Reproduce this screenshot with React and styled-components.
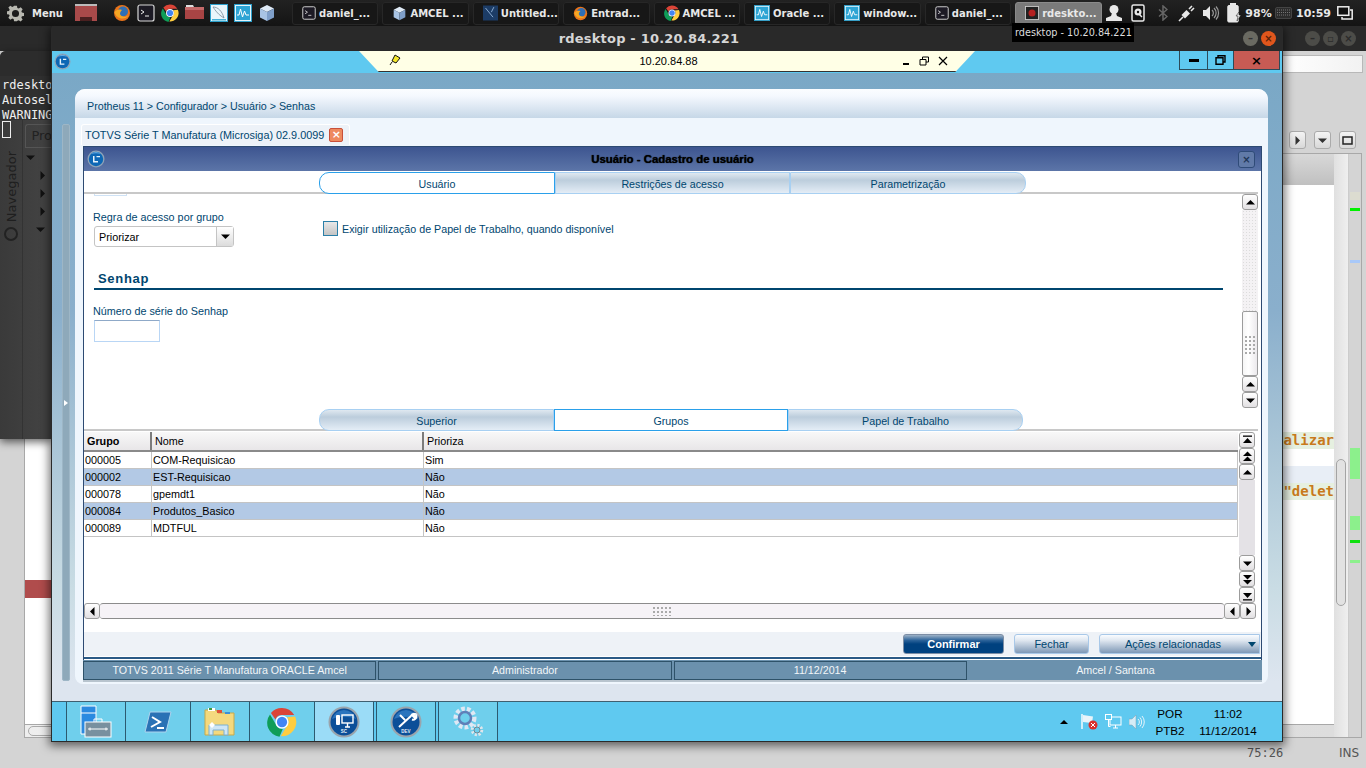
import React from 'react';
import styled, { createGlobalStyle } from 'styled-components';

const GlobalStyle = createGlobalStyle`
  html, body { margin: 0; padding: 0; background: #d4d4d4; overflow: hidden; }
  * { box-sizing: border-box; }
`;

const PANEL_FONT = '"DejaVu Sans", sans-serif';
const REMOTE_FONT = '"Liberation Sans", Arial, sans-serif';
const INK = '#00466f';

/* ---------- drawings ---------- */

const Gear = () => (
  <svg width="17" height="17" viewBox="0 0 24 24">
    <path fill="#b8b8b0" fillRule="evenodd" d="M10 1h4l.6 3.2 2 .8 2.7-1.8 2.8 2.8-1.8 2.7.8 2 3.2.6v4l-3.2.6-.8 2 1.8 2.7-2.8 2.8-2.7-1.8-2 .8L14 23h-4l-.6-3.2-2-.8-2.7 1.8-2.8-2.8 1.8-2.7-.8-2L-.3 13V9l3.2-.6.8-2L1.9 3.7l2.8-2.8 2.7 1.8 2-.8zM12 7a5 5 0 100 10 5 5 0 000-10z" />
  </svg>
);

const Chrome = ({ size = 18 }) => (
  <svg width={size} height={size} viewBox="0 0 32 32">
    <path fill="#db4437" d="M16 1a15 15 0 0113 7.5H16a7.5 7.5 0 00-7 4.7L4.2 6.4A15 15 0 0116 1z" />
    <path fill="#0f9d58" d="M3.2 7.9l6 10.3a7.5 7.5 0 007.6 5.2l-3.5 8.4A15 15 0 013.2 7.9z" />
    <path fill="#ffcd40" d="M30 10a15 15 0 01-15.2 21l6-10.3a7.5 7.5 0 00.6-9.8z" />
    <circle cx="16" cy="16" r="7" fill="#fff" />
    <circle cx="16" cy="16" r="5.5" fill="#4285f4" />
  </svg>
);

const Terminal = ({ size = 18 }) => (
  <svg width={size} height={size} viewBox="0 0 18 18">
    <rect x="1" y="1" width="16" height="16" rx="2" fill="#1c1a24" stroke="#d8d8d8" strokeWidth="1.2" />
    <path d="M4 6l3 2-3 2M8 12h4" fill="none" stroke="#eee" strokeWidth="1" />
  </svg>
);

const Firefox = ({ size = 18 }) => (
  <svg width={size} height={size} viewBox="0 0 18 18">
    <circle cx="9" cy="9" r="8" fill="#e9741b" />
    <circle cx="10" cy="7.5" r="5" fill="#2f6fb5" />
    <path d="M1.5 8C3 15 12 17 16 11c-3 3-8 2-9-1 0-2 1-3 2-4-3-1-6 0-7.5 2z" fill="#f5a623" />
  </svg>
);

const Cube = ({ size = 18 }) => (
  <svg width={size} height={size} viewBox="0 0 18 18">
    <path d="M9 1l7 3.5L9 8 2 4.5z" fill="#dfeaf6" />
    <path d="M2 4.5L9 8v9l-7-3.5z" fill="#a9c4e4" />
    <path d="M16 4.5L9 8v9l7-3.5z" fill="#7f9fc9" />
  </svg>
);

const Monitor = ({ size = 18 }) => (
  <svg width={size} height={size} viewBox="0 0 18 18">
    <rect x="0.5" y="0.5" width="17" height="17" fill="#e4f4fb" stroke="#2da0cc" />
    <rect x="2" y="2" width="14" height="14" fill="#2da4d4" />
    <path d="M3 11h2l1.5-6 2 8 2-6 1.5 4H15" fill="none" stroke="#fff" strokeWidth="1" />
  </svg>
);

const Dolphin = () => (
  <svg width="18" height="18" viewBox="0 0 18 18">
    <rect x="0.5" y="0.5" width="17" height="17" fill="#e9f6fb" stroke="#2da0cc" />
    <path d="M3 3c5 0 9 4 11 11l-3-2C8 10 5 6 3 3z" fill="none" stroke="#7a8a98" strokeWidth="0.8" />
    <rect x="2" y="15" width="14" height="1.5" fill="#46b1d6" />
  </svg>
);

const SchemaIcon = () => (
  <svg width="15" height="16" viewBox="0 0 18 18">
    <rect width="18" height="18" fill="#1c3c66" />
    <path d="M3 3l9 11M13 2l-3 6" stroke="#9fc0e6" strokeWidth="1" fill="none" />
  </svg>
);

const RedWindow = () => (
  <svg width="22" height="18" viewBox="0 0 22 18">
    <rect x="0" y="0" width="22" height="2" fill="#bbb" />
    <rect x="0" y="2" width="22" height="15" fill="#a84a4a" />
    <rect x="5" y="13" width="12" height="4" fill="#4a2020" />
  </svg>
);

const RedFolder = () => (
  <svg width="19" height="16" viewBox="0 0 19 16">
    <path d="M1 1h7l1 2h-8z" fill="#ddd" />
    <path d="M0 3h19v12H0z" fill="#a84444" />
    <path d="M0 3h19v3H0z" fill="#c46a6a" />
  </svg>
);

const RdesktopIcon = () => (
  <svg width="14" height="14" viewBox="0 0 16 16">
    <rect x="0.5" y="0.5" width="15" height="15" fill="#222" stroke="#ccc" />
    <circle cx="8" cy="8" r="4" fill="#b52020" />
  </svg>
);

const TotvsBall = ({ size = 17 }) => (
  <svg width={size} height={size} viewBox="0 0 18 18">
    <circle cx="9" cy="9" r="8.5" fill="#8fa4b8" />
    <circle cx="9" cy="9" r="7.2" fill="#0d67b5" />
    <path d="M4 4a7 7 0 0110 0c-3-1-7-1-10 0z" fill="#63a9e0" />
    <path d="M6 6h1.5v5H11v1.5H6zM9.5 6H13v1.3H9.5z" fill="#e6f2fb" />
  </svg>
);

const Pin = () => (
  <svg width="12" height="12" viewBox="0 0 12 12">
    <path d="M6 1l5 3-4 5-4-2z" fill="#f5e82a" stroke="#111" />
    <path d="M3 8L1 11" stroke="#111" />
  </svg>
);

const PanelPerson = () => (
  <svg width="18" height="18" viewBox="0 0 18 18">
    <circle cx="9" cy="5.5" r="4.5" fill="#e8e8e8" />
    <path d="M7 9h4l1 3 5 2v3H1v-3l5-2z" fill="#e8e8e8" />
  </svg>
);

const PanelDisk = () => (
  <svg width="14" height="18" viewBox="0 0 14 18">
    <rect x="1" y="1" width="12" height="16" rx="1.5" fill="#111" stroke="#e8e8e8" strokeWidth="1.5" />
    <circle cx="7" cy="8" r="3.5" fill="#e8e8e8" />
    <circle cx="7" cy="8" r="1.2" fill="#111" />
    <path d="M8 10l3 3" stroke="#e8e8e8" strokeWidth="1.5" />
  </svg>
);

const PanelBluetooth = () => (
  <svg width="10" height="16" viewBox="0 0 10 16">
    <path d="M1 4.5l8 7L5 15V1l4 3.5-8 7" fill="none" stroke="#666" strokeWidth="1.5" />
  </svg>
);

const PanelPlug = () => (
  <svg width="18" height="18" viewBox="0 0 18 18">
    <path d="M1 17l4-4" stroke="#e8e8e8" strokeWidth="1.6" />
    <path d="M3.5 11l3.5 3.5 5-5-3.5-3.5z" fill="#e8e8e8" />
    <path d="M11 5l3-3M13 7l3-3" stroke="#e8e8e8" strokeWidth="1.6" />
  </svg>
);

const PanelVolume = () => (
  <svg width="17" height="16" viewBox="0 0 17 16">
    <path d="M0 5h3l4-4v14l-4-4H0z" fill="#e8e8e8" />
    <path d="M9 5a4 4 0 010 6M11 3a7 7 0 010 10M13 1.5a9.5 9.5 0 010 13" fill="none" stroke="#999" strokeWidth="1.2" />
  </svg>
);

const PanelBattery = () => (
  <svg width="16" height="20" viewBox="0 0 16 20">
    <rect x="3" y="0" width="6" height="3" fill="#e8e8e8" />
    <rect x="0.8" y="2.5" width="10.4" height="16.5" rx="1" fill="#e8e8e8" stroke="#e8e8e8" />
    <path d="M12 9l-3 4h2l-1 5 4-6h-2z" fill="#e8e8e8" stroke="#111" strokeWidth="0.5" />
  </svg>
);

const PanelKeyboard = () => (
  <svg width="17" height="12" viewBox="0 0 17 12">
    <rect x="0.5" y="0.5" width="16" height="11" rx="1.5" fill="#2c2c2c" stroke="#444" />
    <path d="M2 3h13M2 5.5h13M2 8h13" stroke="#777" strokeDasharray="1 1" />
  </svg>
);

const PanelWindows = () => (
  <svg width="16" height="14" viewBox="0 0 16 14">
    <rect x="0.8" y="0.8" width="11" height="8.5" fill="#111" stroke="#eee" strokeWidth="1.5" />
    <path d="M13 4h2.2v9H5v-2" fill="none" stroke="#eee" strokeWidth="1.5" />
  </svg>
);

const ServerCase = () => (
  <svg width="32" height="33" viewBox="0 0 32 33">
    <path d="M1 1h15v28H1z" fill="#2a8ae0" stroke="#fff" />
    <path d="M1 8h15" stroke="#fff" />
    <rect x="5" y="17" width="26" height="15" fill="#78909f" stroke="#fff" />
    <path d="M14 17v-3h8v3" fill="none" stroke="#fff" />
    <path d="M8 24h20M10 22.5v3M26 22.5v3" stroke="#fff" />
  </svg>
);

const PowerShell = () => (
  <svg width="28" height="24" viewBox="0 0 28 24">
    <path d="M6 2h21l-5 20H1z" fill="#2a72b5" stroke="#aed4ee" />
    <path d="M8 7l8 5-9 5M13 18h7" fill="none" stroke="#fff" strokeWidth="2" />
  </svg>
);

const FolderWin = () => (
  <svg width="32" height="29" viewBox="0 0 32 29">
    <path d="M1 3h11l2 3h16v22H1z" fill="#f4d97e" stroke="#c7a94a" />
    <rect x="4" y="1" width="7" height="3" fill="#fff" />
    <rect x="5" y="1" width="3" height="2" fill="#3c9a3c" />
    <rect x="13" y="3" width="5" height="3" fill="#e05038" />
    <rect x="21" y="5" width="5" height="2" fill="#3a90d8" />
    <path d="M5 28V18h19v10h-4v-5h-11v5z" fill="#cfe6f5" stroke="#7db0d0" />
    <path d="M8 15l3 3-3 3-3-3z" fill="#fff" />
  </svg>
);

const RoundBadge = ({ label, children }) => (
  <svg width="32" height="32" viewBox="0 0 32 32">
    <circle cx="16" cy="16" r="15.5" fill="#9aa4ac" />
    <circle cx="16" cy="16" r="13.5" fill="#0c4f98" />
    <path d="M4 13a12.5 12.5 0 0124 0c-7-3-17-3-24 0z" fill="#2a74bd" />
    {children}
    <text x="16" y="26.5" fontSize="4.5" fontWeight="700" fill="#e6f0fa" textAnchor="middle" fontFamily={REMOTE_FONT}>{label}</text>
  </svg>
);

const Gears = () => (
  <svg width="33" height="31" viewBox="0 0 33 31">
    <circle cx="13" cy="12" r="9" fill="none" stroke="#dfe8f4" strokeWidth="5" strokeDasharray="3.5 2" />
    <circle cx="13" cy="12" r="6" fill="none" stroke="#5f7fb8" strokeWidth="2.5" />
    <circle cx="25" cy="24" r="4.5" fill="none" stroke="#dfe6ec" strokeWidth="3.5" strokeDasharray="2 1.5" />
    <circle cx="25" cy="24" r="3" fill="none" stroke="#6f8896" strokeWidth="1" />
  </svg>
);

const FlagError = () => (
  <svg width="17" height="16" viewBox="0 0 17 16">
    <path d="M1 0v15" stroke="#fff" strokeWidth="1.4" />
    <path d="M2 1l10 1.5L11 9 2 8z" fill="#e9f4fa" />
    <circle cx="12" cy="11" r="4.5" fill="#d9302c" />
    <path d="M10 9l4 4M14 9l-4 4" stroke="#fff" />
  </svg>
);

const NetworkTray = () => (
  <svg width="17" height="16" viewBox="0 0 17 16">
    <rect x="5" y="3" width="11" height="8" fill="none" stroke="#fff" />
    <path d="M8 14h5M10.5 11v3" stroke="#fff" />
    <rect x="0.5" y="0.5" width="6" height="5" fill="#5fc9f0" stroke="#fff" />
    <path d="M3.5 5.5v7h2" fill="none" stroke="#fff" />
  </svg>
);

const SpeakerTray = () => (
  <svg width="16" height="14" viewBox="0 0 16 14">
    <path d="M0 4h3l4-4v14l-4-4H0z" fill="#d6ecf6" stroke="#7d9eb0" strokeWidth="0.5" />
    <path d="M9 4a4 4 0 010 6M11 2.5a7 7 0 010 9M13 1a9 9 0 010 12" fill="none" stroke="#e6f4fb" />
  </svg>
);

/* scroll arrow: dir up/down/left/right, two = double, bar = to the end */
const Arrow = ({ dir = 'up', two, bar, color = '#000' }) => {
  const rot = { up: 0, down: 180, left: 270, right: 90 }[dir];
  return (
    <svg width="11" height="11" viewBox="0 0 11 11" style={{ transform: `rotate(${rot}deg)` }}>
      {bar && <rect x="1" y="0.5" width="9" height="1.3" fill={color} />}
      {two ? (
        <>
          <path d="M5.5 0.5L10 5H1z" fill={color} />
          <path d="M5.5 5.5L10 10H1z" fill={color} />
        </>
      ) : (
        <path d={bar ? 'M5.5 3L10 8H1z' : 'M5.5 3L10 7.5H1z'} fill={color} />
      )}
    </svg>
  );
};

/* ---------- desktop ---------- */

const Desktop = styled.div`
  position: relative;
  width: 1366px;
  height: 768px;
  overflow: hidden;
  background: #d4d4d4;
`;

/* ---------- top panel ---------- */

const TopPanel = styled.div`
  position: absolute;
  z-index: 5;
  top: 0;
  left: 0;
  width: 1366px;
  height: 26px;
  display: flex;
  align-items: center;
  background: linear-gradient(#222, #141414);
  color: #e8e8e8;
  font: 700 10px ${PANEL_FONT};
`;

const MenuButton = styled.div`
  display: flex;
  align-items: center;
  gap: 8px;
  width: 75px;
  padding-left: 7px;
`;

const ShowDesktop = styled.div`
  display: flex;
  width: 38px;
  justify-content: flex-start;
`;

const Launchers = styled.div`
  display: flex;
  gap: 6px;
  width: 179px;
`;

const Tasks = styled.div`
  display: flex;
  gap: 4px;
`;

const Task = styled.div`
  width: 86.4px;
  height: 23px;
  display: flex;
  align-items: center;
  gap: 3px;
  padding-left: 9px;
  border: 1px solid ${p => (p.$active ? '#8a8a8a' : '#272727')};
  border-radius: 3px;
  background: ${p => (p.$active ? '#7a7a7a' : '#171717')};
  white-space: nowrap;
  overflow: hidden;
`;

const PanelTray = styled.div`
  display: flex;
  align-items: center;
  font-size: 11px;
`;

const PanelSlot = styled.div`
  width: ${p => p.$w}px;
  display: flex;
  justify-content: center;
  white-space: nowrap;
`;

const Tip = styled.div`
  position: absolute;
  z-index: 6;
  left: 1012px;
  top: 23px;
  width: 122px;
  height: 19px;
  padding-left: 3px;
  background: #000;
  color: #ddd;
  font: 9.7px/19px ${PANEL_FONT};
  white-space: nowrap;
`;

/* ---------- window behind (IDE) ---------- */

const BackWindow = styled.div`
  position: absolute;
  left: 0;
  top: 26px;
  width: 1366px;
  height: 742px;
  display: flex;
  flex-direction: column;
  background: #d4d4d4;
`;

const BackTitle = styled.div`
  height: 25px;
  display: flex;
  justify-content: flex-end;
  align-items: center;
  gap: 3px;
  padding-right: 10px;
  background: #2a2a2a;
`;

const WinDot = styled.div`
  width: 15px;
  height: 15px;
  border-radius: 50%;
  background: ${p => p.$color || '#4c4c48'};
  display: flex;
  align-items: center;
  justify-content: center;
  color: ${p => p.$ink || '#2a2a2a'};
  font: 700 10px/1 ${PANEL_FONT};
`;

const BackSearch = styled.div`
  height: 74px;
  padding: 4px 3px 0 0;
  display: flex;
  justify-content: flex-end;
`;

const SearchBox = styled.div`
  width: 84px;
  height: 18px;
  background: linear-gradient(90deg, #fff, #f2f2f2);
  border: 1px solid #b8b8b8;
`;

const ViewTools = styled.div`
  height: 28px;
  padding: 6px 10px 0 0;
  display: flex;
  justify-content: flex-end;
  gap: 8px;
`;

const ViewButton = styled.div`
  width: 17px;
  height: 18px;
  border: 1px solid #aaa;
  border-radius: 3px;
  background: linear-gradient(#f4f4f4, #d8d8d8);
  display: flex;
  align-items: center;
  justify-content: center;
`;

const EditorRow = styled.div`
  flex: 1;
  min-height: 0;
  display: flex;
  margin: 0 4px 0 24px;
  border: 1px solid #a8a8a8;
`;

const EditorColumn = styled.div`
  flex: 1;
  min-width: 0;
  display: flex;
  flex-direction: column;
`;

const EditorHead = styled.div`
  height: 31px;
  background: linear-gradient(#d8d8d8, #c0c0c0);
`;

const Code = styled.div`
  flex: 1;
  display: flex;
  flex-direction: column;
  background: #fff;
`;

const CodeLine = styled.div`
  width: ${p => (p.$left ? '26px' : '60px')};
  height: ${p => p.$h || 17}px;
  flex: none;
  margin: ${p => p.$gap || 0}px ${p => (p.$left ? 'auto' : 0)} 0 ${p => (p.$left ? 0 : 'auto')};
  background: ${p => p.$bg};
  color: #c87a1c;
  font: 700 14px/17px "DejaVu Sans Mono", monospace;
  text-align: right;
  white-space: pre;
`;

const EditorHScroll = styled.div`
  height: 13px;
  border-top: 1px solid #a8a8a8;
  background: linear-gradient(90deg, #eee, #ddd);
  padding: 1px 3px;
`;

const HThumb = styled.div`
  width: 300px;
  height: 10px;
  border: 1px solid #aaa;
  border-radius: 5px;
`;

const ScrollLane = styled.div`
  width: 14px;
  padding: 305px 2px 0;
  background: linear-gradient(90deg, #e0e0e0, #efefef);
`;

const LaneThumb = styled.div`
  width: 10px;
  height: 147px;
  border: 1px solid #a4a4a4;
  border-radius: 5px;
  background: #e2e2e2;
`;

const Overview = styled.div`
  width: 13px;
  padding: 38px 1px 0;
  background: #d4d4d4;
  border-left: 1px solid #ccc;
`;

const Mark = styled.div`
  height: ${p => p.$h}px;
  margin-top: ${p => p.$gap || 0}px;
  background: ${p => p.$color};
`;

const BackStatus = styled.div`
  height: 30px;
  display: flex;
  align-items: center;
  justify-content: flex-end;
  color: #555;
  font: 12px ${PANEL_FONT};
`;

const Position = styled.span`
  width: 92px;
  font: 12px "DejaVu Sans Mono", monospace;
`;

const Insert = styled.span`
  width: 27px;
`;

/* ---------- terminal behind ---------- */

const TerminalWindow = styled.div`
  position: absolute;
  left: 0;
  top: 51px;
  width: 52px;
  height: 388px;
  display: flex;
  flex-direction: column;
  background: #3c3c3c;
  border-radius: 6px 0 0 0;
  box-shadow: 0 3px 8px rgba(0, 0, 0, 0.6);
  overflow: hidden;
`;

const TerminalHead = styled.div`
  height: 25px;
  background: #2c2c2c;
`;

const TerminalText = styled.div`
  height: 44px;
  padding: 2px 0 0 2px;
  background: #303030;
  color: #eee;
  font: 12px/15px "DejaVu Sans Mono", monospace;
  white-space: nowrap;
`;

const TerminalBody = styled.div`
  flex: 1;
  display: flex;
  position: relative;
  background: linear-gradient(90deg, #3a3a3a 0, #444 100%);
`;

const Caret = styled.div`
  position: absolute;
  left: 2px;
  top: 1px;
  width: 9px;
  height: 17px;
  border: 1px solid #eee;
`;

const NavRail = styled.div`
  width: 25px;
  padding-top: 31px;
  border-right: 1px solid #333;
  display: flex;
  flex-direction: column;
  align-items: center;
  font: 13px ${PANEL_FONT};
`;

const NavLabel = styled.div`
  writing-mode: vertical-rl;
  transform: rotate(180deg);
  color: #1f1f1f;
`;

const Compass = styled.div`
  width: 14px;
  height: 14px;
  margin-top: 5px;
  border: 2px solid #222;
  border-radius: 50%;
`;

const TreeColumn = styled.div`
  flex: 1;
  padding: 4px 0 0 2px;
`;

const ProTab = styled.div`
  height: 24px;
  padding-left: 5px;
  border: solid #555;
  border-width: 1px 0 1px 1px;
  border-radius: 3px 0 0 0;
  font: 13px/22px ${PANEL_FONT};
  color: #222;
  white-space: nowrap;
`;

const TreeArrow = styled.div`
  height: 18px;
  padding-left: ${p => p.$indent}px;
  display: flex;
  align-items: center;
`;

/* ---------- rdesktop window ---------- */

const RemoteWindow = styled.div`
  position: absolute;
  z-index: 2;
  left: 51px;
  top: 26px;
  width: 1232px;
  height: 716px;
  display: flex;
  flex-direction: column;
  border-radius: 4px 4px 0 0;
  box-shadow: 0 2px 10px 2px rgba(0, 0, 0, 0.55);
  border: solid #2a2a2a;
  border-width: 0 1px 1px 1px;
`;

const RemoteTitle = styled.div`
  height: 25px;
  flex: none;
  position: relative;
  display: flex;
  align-items: center;
  justify-content: flex-end;
  gap: 3px;
  padding-right: 6px;
  background: #292929;
`;

const TitleText = styled.div`
  position: absolute;
  left: 0;
  right: 36px;
  text-align: center;
  color: #d6d6d6;
  font: 700 13px ${PANEL_FONT};
  letter-spacing: 0.2px;
`;

const ConnectionStrip = styled.div`
  height: 22px;
  flex: none;
  display: grid;
  grid-template-columns: 1fr 616px 1fr;
  background: #5fc9f0;
`;

const StripLeft = styled.div`
  padding: 2px 0 0 2px;
`;

const ConnectionBar = styled.div`
  height: 21px;
  display: grid;
  grid-template-columns: 1fr 150px 1fr;
  align-items: center;
  padding: 0 27px 0 30px;
  background: #ffffe6;
  clip-path: polygon(0 0, 100% 0, 96.8% 100%, 3.2% 100%);
  border-bottom: 1px solid #333;
  color: #000;
  font: 11px ${REMOTE_FONT};
  text-align: center;
`;

const BarPin = styled.div`
  text-align: left;
`;

const BarIcons = styled.div`
  display: flex;
  justify-content: flex-end;
  align-items: center;
  gap: 8px;
`;

const StripRight = styled.div`
  display: flex;
  justify-content: flex-end;
  padding-right: 2px;
`;

const CtrlButton = styled.div`
  width: ${p => p.$w}px;
  height: 19px;
  border: 1px solid #2c4b5a;
  border-top: 0;
  margin-left: -1px;
  background: ${p => p.$bg || 'transparent'};
  display: flex;
  align-items: center;
  justify-content: center;
  color: #000;
  font: 700 13px/1 ${PANEL_FONT};
`;

const RemoteBody = styled.div`
  flex: 1;
  min-height: 0;
  display: flex;
  padding: 16px 14px 17px 10px;
  background: linear-gradient(#7aa8c6 0, #8aafcc 38%, #a8c4d6 58%, #c9dce4 82%, #dde5ef 97%);
`;

const Splitter = styled.div`
  width: 8px;
  margin: 35px 5px 3px 0;
  border: 1px solid #9db6c6;
  border-radius: 2px;
  background: #8ea9ba;
  display: flex;
  align-items: center;
  justify-content: center;
`;

const SplitArrow = styled.div`
  width: 0;
  height: 0;
  border: 3px solid transparent;
  border-left: 4px solid #fff;
  border-right: 0;
`;

const Panel = styled.div`
  flex: 1;
  min-width: 0;
  display: flex;
  flex-direction: column;
  padding-bottom: 2px;
  background: #eff6fd;
  border-radius: 10px 10px 8px 8px;
  font: 10.7px ${REMOTE_FONT};
`;

const Breadcrumb = styled.div`
  height: 29px;
  flex: none;
  padding: 11px 0 0 12px;
  background: linear-gradient(#fbfdff 0, #f4f8fe 25%, #c6d7e7 100%);
  border-radius: 10px 10px 0 0;
  color: ${INK};
`;

const DocTab = styled.div`
  width: 269px;
  height: 21px;
  flex: none;
  margin: 6px 0 0 6px;
  display: flex;
  align-items: center;
  gap: 5px;
  padding-left: 3px;
  border: 1px solid #fff;
  border-bottom: 0;
  border-radius: 3px 3px 0 0;
  background: #edf2f8;
  color: ${INK};
  font-size: 10.85px;
  white-space: nowrap;
`;

const TabClose = styled.div`
  width: 14px;
  height: 14px;
  border: 1px solid #c9503a;
  border-radius: 2px;
  background: #ee8a5f;
  color: #fff;
  font: 700 11px/12px ${PANEL_FONT};
  text-align: center;
`;

const Dialog = styled.div`
  flex: 1;
  min-height: 0;
  margin: 1px 6px 0 8px;
  display: flex;
  flex-direction: column;
`;

const DialogFrame = styled.div`
  flex: 1;
  min-height: 0;
  display: flex;
  flex-direction: column;
  border: 1px solid #2d4a72;
  border-bottom: 0;
  background: #fff;
`;

const DialogTitle = styled.div`
  height: 24px;
  flex: none;
  position: relative;
  display: flex;
  align-items: center;
  padding: 0 6px 0 3px;
  justify-content: space-between;
  background: linear-gradient(#3d5590, #5c75a8);
`;

const DialogName = styled.div`
  position: absolute;
  left: 0;
  right: 0;
  text-align: center;
  color: #000;
  font-size: 11.4px;
  font-weight: 700;
  text-shadow: 0 0 1px #000;
`;

const DialogClose = styled.div`
  position: relative;
  width: 17px;
  height: 17px;
  border: 1px solid #2f4b78;
  border-radius: 3px;
  background: #617aa8;
  color: #1e3556;
  font: 700 10px/15px ${PANEL_FONT};
  text-align: center;
`;

const TabRow = styled.div`
  height: 23px;
  flex: none;
  padding: 1px 0 0 235px;
  margin-right: 3px;
  display: flex;
  border-bottom: 2px solid #c8c8c8;
`;

const Tab = styled.div`
  width: ${p => p.$w}px;
  height: 22px;
  flex: none;
  border: 1px solid ${p => (p.$active ? '#2aa0ea' : '#a8d0f2')};
  border-radius: ${p => (p.$first ? '10px 0 0 10px' : p.$last ? '0 10px 10px 0' : '0')};
  background: ${p => (p.$active ? '#fff' : 'linear-gradient(#dfe8f0, #bccddc 35%, #e4edf6)')};
  color: ${INK};
  text-align: center;
  line-height: 22px;
`;

const FormArea = styled.div`
  height: 214px;
  flex: none;
  display: flex;
`;

const FormBody = styled.div`
  flex: 1;
  min-width: 0;
  padding-left: 10px;
  font-size: 10.8px;
`;

const CutField = styled.div`
  width: 33px;
  height: 2px;
  border: 1px solid #cfe2f5;
  border-top: 0;
`;

const FieldRow = styled.div`
  display: flex;
  margin-top: 15px;
`;

const FieldColumn = styled.div`
  width: 229px;
`;

const FieldLabel = styled.div`
  height: 15px;
  margin-left: -1px;
  color: ${INK};
  line-height: 13px;
`;

const SelectBox = styled.div`
  width: 140px;
  height: 21px;
  display: flex;
  border: 1px solid #c4c4c4;
  border-radius: 3px;
  color: #000;
`;

const SelectValue = styled.div`
  flex: 1;
  padding-left: 4px;
  line-height: 20px;
`;

const SelectArrow = styled.div`
  width: 17px;
  border-left: 1px solid #c4c4c4;
  background: linear-gradient(#fff, #dcdcdc);
  display: flex;
  align-items: center;
  justify-content: center;
`;

const CheckRow = styled.div`
  display: flex;
  align-items: center;
  gap: 4px;
  padding-top: 10px;
  height: 25px;
  color: ${INK};
  font-size: 10.7px;
`;

const CheckBox = styled.div`
  width: 15px;
  height: 15px;
  border: 1px solid #2b7fa8;
  background: linear-gradient(#e8e8e8, #c4c4c4);
`;

const SectionTitle = styled.div`
  margin: 23px 0 0 4px;
  height: 18px;
  color: ${INK};
  font-size: 13px;
  font-weight: 700;
  letter-spacing: 0.7px;
  line-height: 18px;
`;

const SectionLine = styled.div`
  width: 1129px;
  height: 2px;
  margin: 0 0 15px;
  background: #00466f;
`;

const TextBox = styled.div`
  width: 66px;
  height: 22px;
  border: 1px solid #b9d6f5;
  border-top-color: #8fa9c8;
`;

const VScroll = styled.div`
  width: 16px;
  margin-right: 3px;
  display: flex;
  flex-direction: column;
`;

const ScrollBtn = styled.div`
  width: ${p => p.$w || 16}px;
  height: ${p => p.$h || 16}px;
  flex: none;
  border: 1px solid #9c9c9c;
  border-radius: 3px;
  background: linear-gradient(#fff, #e2e0e2);
  display: flex;
  align-items: center;
  justify-content: center;
`;

const DottedTrack = styled.div`
  flex: 1;
  background: #f4f2f4;
  background-image: radial-gradient(#dcdcdc 0.5px, transparent 0.6px);
  background-size: 3px 3px;
`;

const Thumb = styled.div`
  height: 65px;
  flex: none;
  padding-top: 23px;
  border: 1px solid #9c9c9c;
  border-radius: 2px;
  background: linear-gradient(90deg, #f6f6f6, #fff 40%, #ebe9ec);
  display: flex;
  justify-content: center;
`;

const Grip = styled.div`
  width: ${p => p.$w}px;
  height: ${p => p.$h}px;
  background-image: radial-gradient(#aaa 0.9px, transparent 1px);
  background-size: 4px 4px;
`;

const GridArea = styled.div`
  height: 172px;
  padding-top: 1px;
  flex: none;
  display: flex;
  gap: 1px;
`;

const GridTable = styled.div`
  width: 1154px;
  flex: none;
  color: #000;
  font-size: 10.8px;
`;

const GridHead = styled.div`
  height: 20px;
  display: flex;
  background: linear-gradient(#f8f8f8, #e8e6e8);
  border-bottom: 2px solid #8a8a8a;
`;

const HeadCell = styled.div`
  width: ${p => (p.$w ? `${p.$w}px` : 'auto')};
  flex: ${p => (p.$w ? 'none' : 1)};
  padding-left: 3px;
  line-height: 18px;
  border-right: ${p => (p.$w ? '2px solid #7c7c7c' : '0')};
  font-weight: ${p => (p.$bold ? 700 : 400)};
`;

const GridRow = styled.div`
  height: 17px;
  display: flex;
  background: ${p => (p.$selected ? '#b3c9e5' : '#fff')};
  border-bottom: 1px solid #c4c4c4;
  border-right: 1px solid #c4c4c4;
`;

const GridCell = styled.div`
  width: ${p => (p.$w ? `${p.$w}px` : 'auto')};
  flex: ${p => (p.$w ? 'none' : 1)};
  padding-left: 1px;
  line-height: 16px;
  border-right: ${p => (p.$w ? '1px solid #c4c4c4' : '0')};
`;

const GridScroll = styled.div`
  width: 16px;
  display: flex;
  flex-direction: column;
`;

const GridTrack = styled.div`
  flex: 1;
  background: #e4e2e6;
`;

const HScroll = styled.div`
  width: 1172px;
  height: 16px;
  flex: none;
  display: flex;
`;

const HTrack = styled.div`
  flex: 1;
  border: solid #8c8c8c;
  border-width: 1px 0;
  background: #f6f3f7;
  display: flex;
  justify-content: center;
  align-items: center;
  border-radius: 3px;
`;

const ActionBar = styled.div`
  height: 24px;
  flex: none;
  margin-top: 13px;
  padding: 2px 1px 0 0;
  display: flex;
  justify-content: flex-end;
  gap: 10px;
  background: #eef2f7;
`;

const ActionButton = styled.div`
  width: ${p => p.$w}px;
  height: 20px;
  position: relative;
  padding-right: ${p => (p.$menu ? 13 : 0)}px;
  border: 1px solid ${p => (p.$primary ? '#7d8ea5' : '#a8c8e8')};
  border-radius: ${p => (p.$menu ? '3px 0 0 3px' : '3px')};
  background: ${p => (p.$primary
    ? 'linear-gradient(#9fb3c8, #2b6299 30%, #00417f 50%)'
    : 'linear-gradient(#fafcff, #dfe7f0 30%, #7e98b6)')};
  color: ${p => (p.$primary ? '#fff' : INK)};
  font-size: 11px;
  font-weight: ${p => (p.$primary ? 700 : 400)};
  text-align: center;
  line-height: 19px;
`;

const MenuCaret = styled.div`
  position: absolute;
  right: 3px;
  top: 7px;
  width: 0;
  height: 0;
  border: solid transparent;
  border-width: 5px 4px 0;
  border-top-color: #00466f;
`;

const DialogEnd = styled.div`
  flex: 1;
  border-top: 2px solid #2a5a86;
  margin-top: 1px;
  background: #fff;
`;

const StatusBar = styled.div`
  height: 22px;
  flex: none;
  padding-top: 1px;
  display: flex;
  gap: 2px;
  background: #6b91ad;
  border-bottom: 2px solid #b8c4ce;
  color: #f2f6f9;
`;

const StatusCell = styled.div`
  flex: 1;
  border: 1px solid ${p => (p.$plain ? 'transparent' : '#2e5269')};
  text-align: center;
  line-height: 17px;
  white-space: pre;
`;

/* ---------- remote taskbar ---------- */

const Taskbar = styled.div`
  height: 40px;
  flex: none;
  display: flex;
  align-items: stretch;
  padding-left: 15px;
  background: #5fc9f0;
  border-top: 1px solid #3f5f70;
`;

const Launcher = styled.div`
  width: ${p => p.$w}px;
  margin-right: ${p => p.$gap || 0}px;
  display: flex;
  align-items: center;
  justify-content: center;
  border: solid #2c5a70;
  border-width: 0 1px 0 1px;
  margin-left: -1px;
  background: ${p => (p.$active ? '#9bdcf7' : '#6fcfec')};
`;

const RemoteTray = styled.div`
  margin-left: auto;
  margin-right: 18px;
  display: flex;
  align-items: center;
  color: #000;
  font: 11.7px ${REMOTE_FONT};
`;

const TrayUp = styled.div`
  width: 0;
  height: 0;
  border: solid transparent;
  border-width: 0 4px 4px;
  border-bottom-color: #000;
  margin-right: 13px;
`;

const TrayIcon = styled.div`
  margin-right: ${p => p.$gap}px;
  display: flex;
`;

const TrayText = styled.div`
  width: ${p => p.$w}px;
  text-align: center;
  line-height: 17px;
`;

/* ---------- data ---------- */

const TASKS = [
  { icon: <Terminal size={14} />, label: 'daniel_...' },
  { icon: <Cube size={15} />, label: 'AMCEL ...' },
  { icon: <SchemaIcon />, label: 'Untitled...' },
  { icon: <Firefox size={15} />, label: 'Entrad...' },
  { icon: <Chrome size={16} />, label: 'AMCEL ...' },
  { icon: <Monitor size={16} />, label: 'Oracle ...' },
  { icon: <Monitor size={16} />, label: 'window...' },
  { icon: <Terminal size={14} />, label: 'daniel_...' },
  { icon: <RdesktopIcon />, label: 'rdeskto...', active: true }
];

const ROWS = [
  { id: '000005', name: 'COM-Requisicao', flag: 'Sim' },
  { id: '000002', name: 'EST-Requisicao', flag: 'Não', selected: true },
  { id: '000078', name: 'gpemdt1', flag: 'Não' },
  { id: '000084', name: 'Produtos_Basico', flag: 'Não', selected: true },
  { id: '000089', name: 'MDTFUL', flag: 'Não' }
];

export default function App() {
  return (
    <Desktop>
      <GlobalStyle />

      <BackWindow>
        <BackTitle>
          <WinDot>–</WinDot>
          <WinDot>▫</WinDot>
          <WinDot>×</WinDot>
        </BackTitle>
        <BackSearch><SearchBox /></BackSearch>
        <ViewTools>
          <ViewButton><Arrow dir="right" color="#333" /></ViewButton>
          <ViewButton><Arrow dir="down" color="#333" /></ViewButton>
          <ViewButton>
            <svg width="11" height="9" viewBox="0 0 11 9"><rect x="1" y="1" width="9" height="7" fill="none" stroke="#222" strokeWidth="1.5" /></svg>
          </ViewButton>
        </ViewTools>
        <EditorRow>
          <EditorColumn>
            <EditorHead />
            <Code>
              <CodeLine $gap={247} $bg="#e6f0e0">alizar</CodeLine>
              <CodeLine $gap={17} $bg="#e8eef6" />
              <CodeLine $bg="#e6f0e0">"delet</CodeLine>
              <CodeLine $gap={80} $h={18} $left $bg="#b04c4c" />
            </Code>
            <EditorHScroll><HThumb /></EditorHScroll>
          </EditorColumn>
          <ScrollLane><LaneThumb /></ScrollLane>
          <Overview>
            <Mark $h={8} $color="#dcdcd0" />
            <Mark $h={3} $gap={8} $color="#00f000" />
            <Mark $h={3} $gap={49} $color="#a8c8f8" />
            <Mark $h={31} $gap={185} $color="#8cf08c" />
            <Mark $h={14} $gap={37} $color="#8cf08c" />
            <Mark $h={3} $gap={10} $color="#10e010" />
            <Mark $h={3} $gap={17} $color="#8cf08c" />
          </Overview>
        </EditorRow>
        <BackStatus>
          <Position>75:26</Position>
          <Insert>INS</Insert>
        </BackStatus>
      </BackWindow>

      <TerminalWindow>
        <TerminalHead />
        <TerminalText>
          rdeskto<br />Autosel<br />WARNING
        </TerminalText>
        <TerminalBody>
          <Caret />
          <NavRail>
            <NavLabel>Navegador</NavLabel>
            <Compass />
          </NavRail>
          <TreeColumn>
            <ProTab>Pro</ProTab>
            <TreeArrow $indent={0}><Arrow dir="down" color="#111" /></TreeArrow>
            <TreeArrow $indent={12}><Arrow dir="right" color="#111" /></TreeArrow>
            <TreeArrow $indent={12}><Arrow dir="right" color="#111" /></TreeArrow>
            <TreeArrow $indent={12}><Arrow dir="right" color="#111" /></TreeArrow>
            <TreeArrow $indent={10}><Arrow dir="down" color="#111" /></TreeArrow>
          </TreeColumn>
        </TerminalBody>
      </TerminalWindow>

      <RemoteWindow>
        <RemoteTitle>
          <TitleText>rdesktop - 10.20.84.221</TitleText>
          <WinDot $color="#6a6a62" $ink="#333">–</WinDot>
          <WinDot $color="#e0561c" $ink="#5a2208">×</WinDot>
        </RemoteTitle>

        <ConnectionStrip>
          <StripLeft><TotvsBall size={17} /></StripLeft>
          <ConnectionBar>
            <BarPin><Pin /></BarPin>
            <div>10.20.84.88</div>
            <BarIcons>
              <svg width="10" height="10" viewBox="0 0 10 10"><rect x="2" y="7" width="6" height="2" fill="#000" /></svg>
              <svg width="11" height="10" viewBox="0 0 11 10"><path d="M3.5 3V1h6v5H7M1 3.5h6v5.5H1z" fill="none" stroke="#000" /></svg>
              <svg width="10" height="10" viewBox="0 0 10 10"><path d="M1 1l8 8M9 1l-8 8" stroke="#000" strokeWidth="1.2" /></svg>
            </BarIcons>
          </ConnectionBar>
          <StripRight>
            <CtrlButton $w={29}><svg width="10" height="3"><rect width="10" height="3" fill="#000" /></svg></CtrlButton>
            <CtrlButton $w={27}>
              <svg width="11" height="10" viewBox="0 0 11 10"><path d="M3 2V.7h7V7H8.5M1 2.8h7V9.3H1z" fill="none" stroke="#000" strokeWidth="1.4" /></svg>
            </CtrlButton>
            <CtrlButton $w={47} $bg="#c75b54">×</CtrlButton>
          </StripRight>
        </ConnectionStrip>

        <RemoteBody>
          <Splitter><SplitArrow /></Splitter>
          <Panel>
            <Breadcrumb>Protheus 11 &gt; Configurador &gt; Usuário &gt; Senhas</Breadcrumb>
            <DocTab>
              TOTVS Série T Manufatura (Microsiga) 02.9.0099
              <TabClose>×</TabClose>
            </DocTab>
            <Dialog>
              <DialogFrame>
                <DialogTitle>
                  <TotvsBall size={18} />
                  <DialogName>Usuário - Cadastro de usuário</DialogName>
                  <DialogClose>×</DialogClose>
                </DialogTitle>

                <TabRow>
                  <Tab $w={236} $first $active>Usuário</Tab>
                  <Tab $w={235}>Restrições de acesso</Tab>
                  <Tab $w={236} $last>Parametrização</Tab>
                </TabRow>

                <FormArea>
                  <FormBody>
                    <CutField />
                    <FieldRow>
                      <FieldColumn>
                        <FieldLabel>Regra de acesso por grupo</FieldLabel>
                        <SelectBox>
                          <SelectValue>Priorizar</SelectValue>
                          <SelectArrow><Arrow dir="down" /></SelectArrow>
                        </SelectBox>
                      </FieldColumn>
                      <CheckRow>
                        <CheckBox />
                        Exigir utilização de Papel de Trabalho, quando disponível
                      </CheckRow>
                    </FieldRow>
                    <SectionTitle>Senhap</SectionTitle>
                    <SectionLine />
                    <FieldLabel>Número de série do Senhap</FieldLabel>
                    <TextBox />
                  </FormBody>
                  <VScroll>
                    <ScrollBtn><Arrow dir="up" /></ScrollBtn>
                    <DottedTrack />
                    <Thumb><Grip $w={12} $h={20} /></Thumb>
                    <ScrollBtn><Arrow dir="up" /></ScrollBtn>
                    <ScrollBtn><Arrow dir="down" /></ScrollBtn>
                  </VScroll>
                </FormArea>

                <TabRow>
                  <Tab $w={235} $first>Superior</Tab>
                  <Tab $w={234} $active>Grupos</Tab>
                  <Tab $w={235} $last>Papel de Trabalho</Tab>
                </TabRow>

                <GridArea>
                  <GridTable>
                    <GridHead>
                      <HeadCell $w={68} $bold>Grupo</HeadCell>
                      <HeadCell $w={272}>Nome</HeadCell>
                      <HeadCell>Prioriza</HeadCell>
                    </GridHead>
                    {ROWS.map(row => (
                      <GridRow key={row.id} $selected={row.selected}>
                        <GridCell $w={68}>{row.id}</GridCell>
                        <GridCell $w={272}>{row.name}</GridCell>
                        <GridCell>{row.flag}</GridCell>
                      </GridRow>
                    ))}
                  </GridTable>
                  <GridScroll>
                    <ScrollBtn><Arrow dir="up" bar /></ScrollBtn>
                    <ScrollBtn><Arrow dir="up" two /></ScrollBtn>
                    <ScrollBtn><Arrow dir="up" /></ScrollBtn>
                    <GridTrack />
                    <ScrollBtn><Arrow dir="down" /></ScrollBtn>
                    <ScrollBtn><Arrow dir="down" two /></ScrollBtn>
                    <ScrollBtn><Arrow dir="down" bar /></ScrollBtn>
                  </GridScroll>
                </GridArea>

                <HScroll>
                  <ScrollBtn><Arrow dir="left" /></ScrollBtn>
                  <HTrack><Grip $w={20} $h={10} /></HTrack>
                  <ScrollBtn><Arrow dir="left" /></ScrollBtn>
                  <ScrollBtn><Arrow dir="right" /></ScrollBtn>
                </HScroll>

                <ActionBar>
                  <ActionButton $w={101} $primary>Confirmar</ActionButton>
                  <ActionButton $w={75}>Fechar</ActionButton>
                  <ActionButton $w={161} $menu>
                    Ações relacionadas
                    <MenuCaret />
                  </ActionButton>
                </ActionBar>
                <DialogEnd />
              </DialogFrame>
              <StatusBar>
                <StatusCell>TOTVS 2011 Série T Manufatura ORACLE Amcel</StatusCell>
                <StatusCell>Administrador</StatusCell>
                <StatusCell>11/12/2014</StatusCell>
                <StatusCell $plain>Amcel / Santana</StatusCell>
              </StatusBar>
            </Dialog>
          </Panel>
        </RemoteBody>

        <Taskbar>
          <Launcher $w={60}><ServerCase /></Launcher>
          <Launcher $w={66}><PowerShell /></Launcher>
          <Launcher $w={60}><FolderWin /></Launcher>
          <Launcher $w={66}><Chrome size={30} /></Launcher>
          <Launcher $w={60} $gap={3} $active>
            <RoundBadge label="SC">
              <rect x="8" y="9" width="4" height="10" rx="1" fill="#fff" />
              <rect x="14" y="9" width="11" height="8" fill="none" stroke="#fff" strokeWidth="1.4" />
              <path d="M17 21h5M19.5 17v4" stroke="#fff" strokeWidth="1.4" />
            </RoundBadge>
          </Launcher>
          <Launcher $w={60} $gap={3}>
            <RoundBadge label="DEV">
              <path d="M9 21l12-11M21 10a3.5 3.5 0 014 -2l-2 2 1.5 1.5 2-2a3.5 3.5 0 01-4.5 4M10 9l5 5" fill="none" stroke="#fff" strokeWidth="2" />
            </RoundBadge>
          </Launcher>
          <Launcher $w={60}><Gears /></Launcher>

          <RemoteTray>
            <TrayUp />
            <TrayIcon $gap={7}><FlagError /></TrayIcon>
            <TrayIcon $gap={7}><NetworkTray /></TrayIcon>
            <TrayIcon $gap={3}><SpeakerTray /></TrayIcon>
            <TrayText $w={44}>POR<br />PTB2</TrayText>
            <TrayText $w={72}>11:02<br />11/12/2014</TrayText>
          </RemoteTray>
        </Taskbar>
      </RemoteWindow>

      <TopPanel>
        <MenuButton><Gear />Menu</MenuButton>
        <ShowDesktop><RedWindow /></ShowDesktop>
        <Launchers>
          <Firefox />
          <Terminal />
          <Chrome />
          <RedFolder />
          <Dolphin />
          <Monitor />
          <Cube />
        </Launchers>
        <Tasks>
          {TASKS.map((task, i) => (
            <Task key={i} $active={task.active}>{task.icon}{task.label}</Task>
          ))}
        </Tasks>
        <PanelTray>
          <PanelSlot $w={24}><PanelPerson /></PanelSlot>
          <PanelSlot $w={25}><PanelDisk /></PanelSlot>
          <PanelSlot $w={24}><PanelBluetooth /></PanelSlot>
          <PanelSlot $w={25}><PanelPlug /></PanelSlot>
          <PanelSlot $w={24}><PanelVolume /></PanelSlot>
          <PanelSlot $w={22}><PanelBattery /></PanelSlot>
          <PanelSlot $w={26}>98%</PanelSlot>
          <PanelSlot $w={24}><PanelKeyboard /></PanelSlot>
          <PanelSlot $w={36}>10:59</PanelSlot>
          <PanelSlot $w={26}><PanelWindows /></PanelSlot>
        </PanelTray>
      </TopPanel>

      <Tip>rdesktop - 10.20.84.221</Tip>
    </Desktop>
  );
}
